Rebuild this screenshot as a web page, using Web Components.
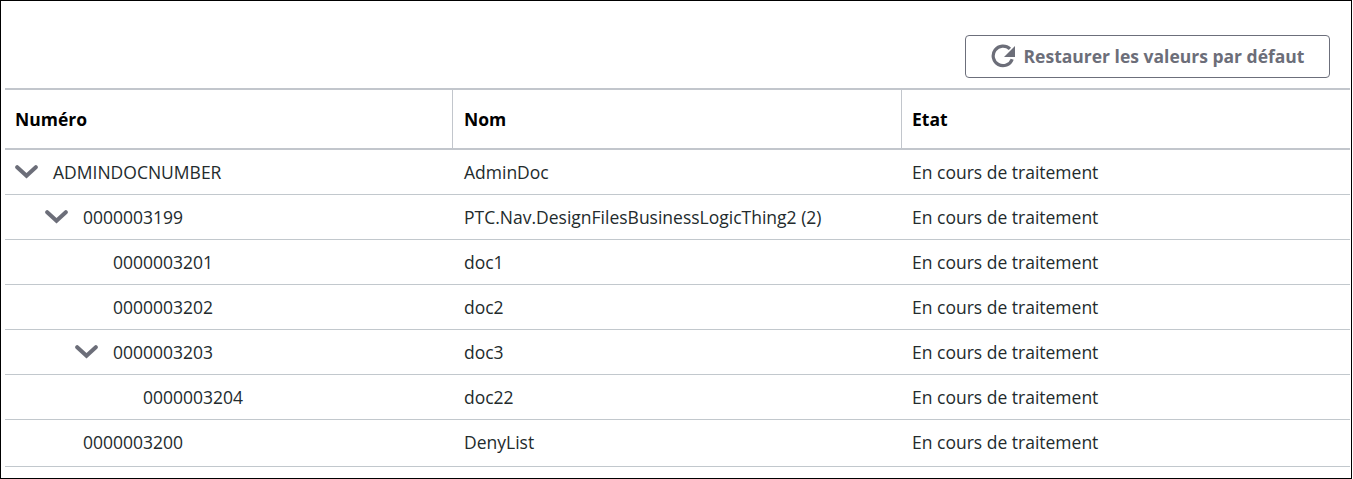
<!DOCTYPE html>
<html lang="fr"><head><meta charset="utf-8"><title>Table</title>
<style>html,body{margin:0;background:#fff;font-family:"Open Sans",sans-serif}</style></head>
<body>
<tree-panel>
  <reset-button slot="toolbar">Restaurer les valeurs par défaut</reset-button>
  <tree-head></tree-head>
  <tree-row num="ADMINDOCNUMBER" name="AdminDoc" level="0" open></tree-row>
  <tree-row num="0000003199" name="PTC.Nav.DesignFilesBusinessLogicThing2 (2)" level="1" open></tree-row>
  <tree-row num="0000003201" name="doc1" level="2"></tree-row>
  <tree-row num="0000003202" name="doc2" level="2"></tree-row>
  <tree-row num="0000003203" name="doc3" level="2" open></tree-row>
  <tree-row num="0000003204" name="doc22" level="3"></tree-row>
  <tree-row num="0000003200" name="DenyList" level="1" last></tree-row>
</tree-panel>
<script>
function def(tag, html, init){
  customElements.define(tag, class extends HTMLElement{
    constructor(){super();this.attachShadow({mode:'open'}).innerHTML=html;}
    connectedCallback(){ if(init) init(this, this.shadowRoot); }
  });
}
def('tree-panel', `<style>
:host{display:block;box-sizing:border-box;width:1352px;height:479px;border:1px solid #000;padding:34px 1px 0 4px;background:#fff}
.bar{display:flex;justify-content:flex-end;padding-right:20px;height:53px;box-sizing:border-box}
</style><div class="bar"><slot name="toolbar"></slot></div><slot></slot>`);
def('reset-button', `<style>
:host{display:flex;box-sizing:border-box;align-items:center;justify-content:center;gap:9px;width:365px;height:43px;padding-bottom:2px;border:1px solid #6c6f7b;border-radius:4px;color:#6c6e79;font:700 17.5px "Open Sans",sans-serif;background:#fff}
svg{width:24px;height:24px;display:block}
</style><svg viewBox="0 0 24 24" fill="none" aria-hidden="true"><path d="M21.2 15.2A9.8 9.8 0 1 1 18.9 4.9" stroke="#6c6e79" stroke-width="3.2"/><path d="M24 2V13H13Z" fill="#6c6e79"/></svg><slot></slot>`);
const cols=`display:grid;grid-template-columns:447px 449px 1fr;`;
def('tree-head', `<style>
:host{display:block}
.r{${cols}height:62px;box-sizing:border-box;border-top:2px solid #c2c6cc;border-bottom:2px solid #c2c6cc;color:#000;font:700 17.5px/58px "Open Sans",sans-serif}
.c{padding-left:10px;box-sizing:border-box}
.c+.c{border-left:1px solid #c2c6cc;padding-left:11px}
.c+.c+.c{padding-left:10px}
</style><div class="r"><div class="c">Numéro</div><div class="c">Nom</div><div class="c">Etat</div></div>`);
def('tree-row', `<style>
:host{display:block}
.r{${cols}height:45px;box-sizing:border-box;border-bottom:1px solid #c2c8cd;color:#232b2d;font:400 17.5px/44px "Open Sans",sans-serif}
:host([last]) .r{height:47px}
.c{padding-left:12px;box-sizing:border-box;white-space:nowrap}
.c:last-child{padding-left:11px}
.first{display:flex;align-items:flex-start;padding-left:10px}
.tw{width:24px;height:14px;margin:15px 14px 0 0;flex:none;visibility:hidden}
:host([open]) .tw{visibility:visible}
.ind{flex:none}
</style><div class="r"><div class="c first"><span class="ind"></span><svg class="tw" viewBox="0 0 24 14" aria-hidden="true"><path d="M2.2 2.2 11.5 10.8 20.8 2.2" fill="none" stroke="#6c6e79" stroke-width="4" stroke-linecap="round"/></svg><span class="n"></span></div><div class="c nm"></div><div class="c">En cours de traitement</div></div>`,
(el,s)=>{
  s.querySelector('.n').textContent=el.getAttribute('num');
  s.querySelector('.nm').textContent=el.getAttribute('name');
  s.querySelector('.ind').style.width=(+el.getAttribute('level'))*30+'px';
});
</script>
</body></html>
